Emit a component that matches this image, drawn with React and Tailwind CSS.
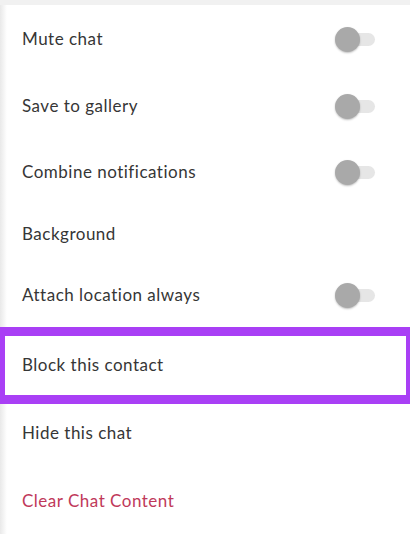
import React from "react";

function Toggle() {
  return (
    <div className="relative w-[40px] h-[26px] mr-[35px] flex items-center">
      <div className="absolute left-[6px] right-0 h-[13px] rounded-full bg-[#e6e6e6]" />
      <div className="absolute left-0 w-[25px] h-[25px] rounded-full bg-[#a9a9a9] shadow-[0_1px_2px_rgba(0,0,0,0.25)]" />
    </div>
  );
}

function Row({ label, toggle, h, red }) {
  return (
    <div className={`flex items-center justify-between pl-[22px] ${h}`}>
      <span
        className={`text-[17px] tracking-[0.5px] ${red ? "text-[#c0395a]" : "text-[#363636]"}`}
      >
        {label}
      </span>
      {toggle && <Toggle />}
    </div>
  );
}

export default function App() {
  return (
    <div
      className="w-[410px] h-[534px] overflow-hidden bg-[linear-gradient(to_right,#e9e9e9_0px,#ffffff_7px)]"
      style={{ fontFamily: "Lato, 'Noto Sans', sans-serif" }}
    >
      <div className="h-[5px] bg-[#f1f1f1]" />
      <Row label="Mute chat" toggle h="h-[68px]" />
      <Row label="Save to gallery" toggle h="h-[66px]" />
      <Row label="Combine notifications" toggle h="h-[66px]" />
      <Row label="Background" h="h-[58px]" />
      <Row label="Attach location always" toggle h="h-[64px]" />
      <div className="h-[77px] border-t-[9px] border-b-[9px] border-l-[5px] border-r-[4px] border-[#a93ff5] bg-white flex items-center pl-[17px]">
        <span className="text-[17px] tracking-[0.5px] text-[#363636] -mt-[2px]">
          Block this contact
        </span>
      </div>
      <Row label="Hide this chat" h="h-[58px]" />
      <Row label="Clear Chat Content" red h="h-[78px]" />
    </div>
  );
}
